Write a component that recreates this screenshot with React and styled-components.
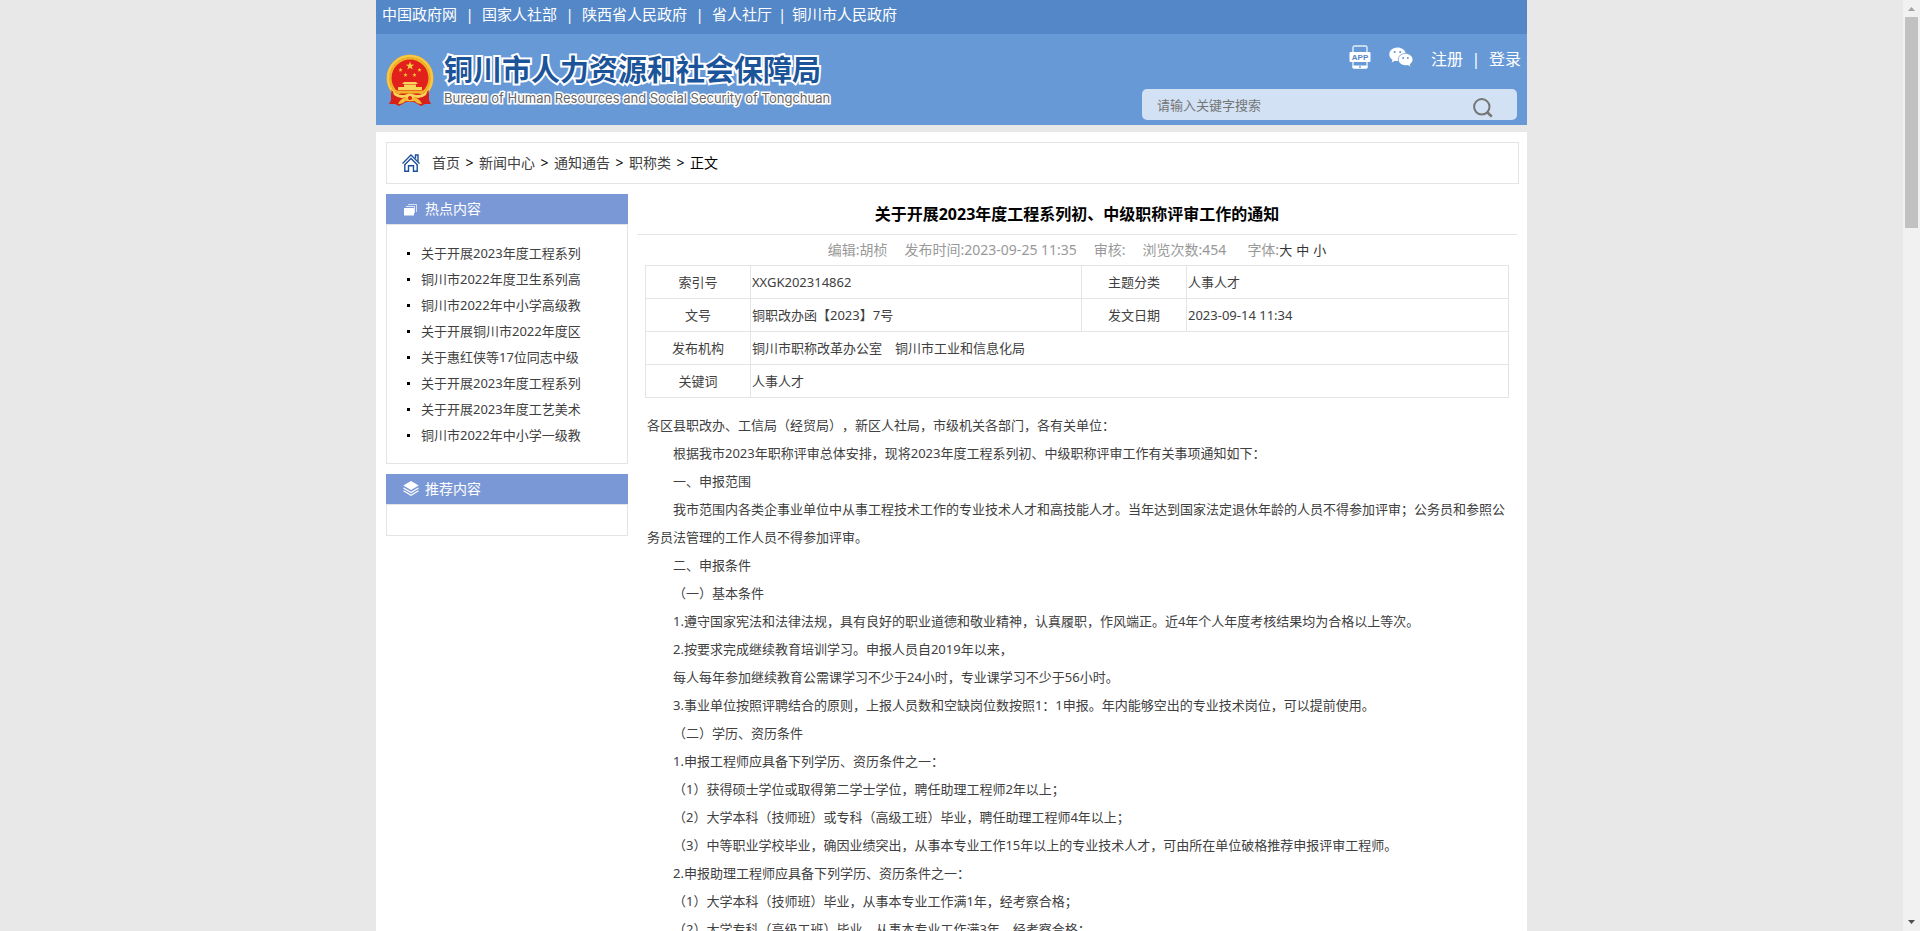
import React from 'react'
import styled, { createGlobalStyle } from 'styled-components'

const topLinks = ['中国政府网', '国家人社部', '陕西省人民政府', '省人社厅', '铜川市人民政府']

const crumbs = ['首页', '新闻中心', '通知通告', '职称类']

const hotList = [
  '关于开展2023年度工程系列',
  '铜川市2022年度卫生系列高',
  '铜川市2022年中小学高级教',
  '关于开展铜川市2022年度区',
  '关于惠红侠等17位同志中级',
  '关于开展2023年度工程系列',
  '关于开展2023年度工艺美术',
  '铜川市2022年中小学一级教',
]

const paragraphs = [
  '根据我市2023年职称评审总体安排，现将2023年度工程系列初、中级职称评审工作有关事项通知如下：',
  '一、申报范围',
  '我市范围内各类企事业单位中从事工程技术工作的专业技术人才和高技能人才。当年达到国家法定退休年龄的人员不得参加评审；公务员和参照公务员法管理的工作人员不得参加评审。',
  '二、申报条件',
  '（一）基本条件',
  '1.遵守国家宪法和法律法规，具有良好的职业道德和敬业精神，认真履职，作风端正。近4年个人年度考核结果均为合格以上等次。',
  '2.按要求完成继续教育培训学习。申报人员自2019年以来，',
  '每人每年参加继续教育公需课学习不少于24小时，专业课学习不少于56小时。',
  '3.事业单位按照评聘结合的原则，上报人员数和空缺岗位数按照1：1申报。年内能够空出的专业技术岗位，可以提前使用。',
  '（二）学历、资历条件',
  '1.申报工程师应具备下列学历、资历条件之一：',
  '（1）获得硕士学位或取得第二学士学位，聘任助理工程师2年以上；',
  '（2）大学本科（技师班）或专科（高级工班）毕业，聘任助理工程师4年以上；',
  '（3）中等职业学校毕业，确因业绩突出，从事本专业工作15年以上的专业技术人才，可由所在单位破格推荐申报评审工程师。',
  '2.申报助理工程师应具备下列学历、资历条件之一：',
  '（1）大学本科（技师班）毕业，从事本专业工作满1年，经考察合格；',
  '（2）大学专科（高级工班）毕业，从事本专业工作满3年，经考察合格；',
]

const STAR = 'M0,-1 L0.24,-0.32 L0.95,-0.31 L0.38,0.12 L0.59,0.81 L0,0.4 L-0.59,0.81 L-0.38,0.12 L-0.95,-0.31 L-0.24,-0.32 Z'

function Emblem() {
  return (
    <svg width="48" height="52" viewBox="0 0 48 52" aria-hidden="true">
      <path d="M5 34 L5 46 L3 50 L9 50 L13 52 L20 48 H28 L35 52 L39 50 L45 50 L43 46 L43 34 Z" fill="#d8201b" />
      <circle cx="24" cy="24" r="23.5" fill="#f0b429" />
      <circle cx="24" cy="24" r="22" fill="none" stroke="#f7c945" strokeWidth="2" />
      <circle cx="24" cy="24" r="20" fill="none" stroke="#e5a524" strokeWidth="1" strokeDasharray="3 2" />
      <circle cx="24" cy="24" r="18.5" fill="#e3211c" />
      <path d={STAR} transform="translate(24 12) scale(4.4)" fill="#f6cf3c" />
      <path d={STAR} transform="translate(14.5 16) scale(2.2)" fill="#f6cf3c" />
      <path d={STAR} transform="translate(33.5 16) scale(2.2)" fill="#f6cf3c" />
      <path d={STAR} transform="translate(19.5 21) scale(2.2)" fill="#f6cf3c" />
      <path d={STAR} transform="translate(28.5 21) scale(2.2)" fill="#f6cf3c" />
      <path d="M16 30 L18 28 H30 L32 30 Z M18 30.5 H30 V33 H18 Z M12 33 H36 V36 H12 Z" fill="#f7d558" />
      <path d="M9 36.5 H39 L36 39.5 H12 Z" fill="#f0b429" />
      <path d="M5 36 L9 47 L16 49 L20 46 H28 L32 49 L39 47 L43 36 L36 40 H12 Z" fill="#d8201b" />
      <path d="M6 35 Q12 43 20 40.5 Q24 38.5 28 40.5 Q36 43 42 35 L40 41 Q35 45 29 43.5 Q24 47 19 43.5 Q13 45 8 41 Z" fill="#f9d65a" />
      <path d="M19 43.5 Q14 45 12 50 Q17 50 20 46.5 H28 Q31 50 36 50 Q34 45 29 43.5 Z" fill="#f3bd35" />
      <circle cx="24" cy="44" r="2" fill="#e3211c" />
    </svg>
  )
}

function AppIcon() {
  return (
    <svg width="22" height="24" viewBox="0 0 22 24" aria-hidden="true">
      <rect x="4" y="1" width="14" height="22" rx="1.5" fill="none" stroke="#e4eefa" strokeWidth="1.4" />
      <rect x="3.5" y="20.5" width="15" height="3" rx="1" fill="#fff" />
      <circle cx="11" cy="22" r="0.9" fill="#6899d7" />
      <rect x="0.5" y="7" width="21" height="10" rx="1" fill="#fff" />
      <text x="11" y="15" textAnchor="middle" fontFamily="Liberation Sans, sans-serif" fontWeight="700" fontSize="8" fill="#5586c6">APP</text>
    </svg>
  )
}

function WechatIcon() {
  return (
    <svg width="24" height="20" viewBox="0 0 24 20" aria-hidden="true">
      <path d="M8.5 0.5 C3.8 0.5 0.3 3.5 0.3 7.3 C0.3 9.6 1.5 11.5 3.5 12.8 L2.7 15.4 L5.7 13.8 Q7.5 14.2 9 14.1 C8.2 10 11.5 6 16.7 6 C15.8 2.8 12.4 0.5 8.5 0.5 Z" fill="#fff" />
      <path d="M16.4 6.8 C12.5 6.8 9.6 9.4 9.6 12.6 C9.6 15.8 12.5 18.3 16.4 18.3 Q17.7 18.3 18.9 18 L21.4 19.4 L20.8 17.2 C22.6 16.1 23.6 14.5 23.6 12.6 C23.6 9.4 20.4 6.8 16.4 6.8 Z" fill="#fff" />
      <circle cx="5.7" cy="5" r="1.1" fill="#6899d7" />
      <circle cx="11.2" cy="5" r="1.1" fill="#6899d7" />
      <circle cx="14.1" cy="10.9" r="1" fill="#6899d7" />
      <circle cx="18.8" cy="10.9" r="1" fill="#6899d7" />
    </svg>
  )
}

function SearchIcon() {
  return (
    <svg width="20" height="20" viewBox="0 0 20 20" aria-hidden="true">
      <circle cx="8.8" cy="8.8" r="7.7" fill="none" stroke="#757575" strokeWidth="2" />
      <path d="M14.2 14.2 L18.8 18.6" stroke="#757575" strokeWidth="2.6" />
    </svg>
  )
}

function HomeIcon() {
  return (
    <svg width="18" height="18" viewBox="0 0 18 18" fill="none" stroke="#1c4f9c" strokeWidth="1.4" aria-hidden="true">
      <path d="M0.5 9.5 L9 1 L17.5 9.5" />
      <path d="M2.5 11 L9 4.5 L15.5 11" />
      <path d="M2.8 10.5 V17.3 H6.5 V11.7 H11.5 V17.3 H15.2 V10.5" />
      <path d="M13.5 4.5 V1 H16 V7.5" />
    </svg>
  )
}

function FolderIcon() {
  return (
    <svg width="16" height="16" viewBox="0 0 16 16" fill="none" aria-hidden="true">
      <path d="M5 4.5 H13.5 V12" stroke="#fff" strokeOpacity="0.7" />
      <path d="M3 6.5 H11.5 V13" stroke="#fff" strokeOpacity="0.8" />
      <rect x="1" y="8" width="10" height="7.5" rx="0.5" fill="#fff" />
    </svg>
  )
}

function LayersIcon() {
  return (
    <svg width="16" height="16" viewBox="0 0 16 16" fill="none" aria-hidden="true">
      <path d="M8 1 L15.7 5.5 L8 10 L0.3 5.5 Z" fill="#fff" />
      <path d="M0.5 8 L8 12.5 L15.5 8" stroke="#fff" strokeWidth="1.2" />
      <path d="M0.5 10.7 L8 15.2 L15.5 10.7" stroke="#fff" strokeWidth="1.2" />
    </svg>
  )
}

function Header() {
  return (
    <header>
      <TopBar>
        {topLinks.map((name, i) => (
          <React.Fragment key={name}>
            {i > 0 && <TopDivider narrow={i === topLinks.length - 1}>|</TopDivider>}
            <a href="#">{name}</a>
          </React.Fragment>
        ))}
      </TopBar>
      <Banner>
        <Logo href="#">
          <Emblem />
          <LogoText>
            <LogoName>铜川市人力资源和社会保障局</LogoName>
            <LogoEnglish>Bureau of Human Resources and Social Security of Tongchuan</LogoEnglish>
          </LogoText>
        </Logo>
        <Tools>
          <UserLinks>
            <IconLink href="#" aria-label="APP"><AppIcon /></IconLink>
            <IconLink href="#" aria-label="微信"><WechatIcon /></IconLink>
            <a href="#">注册</a>
            <UserDivider>|</UserDivider>
            <a href="#">登录</a>
          </UserLinks>
          <SearchBox>
            <SearchInput type="text" placeholder="请输入关键字搜索" aria-label="请输入关键字搜索" />
            <SearchButton type="button" aria-label="搜索"><SearchIcon /></SearchButton>
          </SearchBox>
        </Tools>
      </Banner>
    </header>
  )
}

function Sidebar() {
  return (
    <Aside>
      <section>
        <PanelTitle><FolderIcon />热点内容</PanelTitle>
        <PanelBody>
          <HotList>
            {hotList.map((title, i) => (
              <li key={i}><a href="#">{title}</a></li>
            ))}
          </HotList>
        </PanelBody>
      </section>
      <section>
        <PanelTitle><LayersIcon />推荐内容</PanelTitle>
        <PanelBody />
      </section>
    </Aside>
  )
}

function Article() {
  return (
    <Main>
      <Title>关于开展2023年度工程系列初、中级职称评审工作的通知</Title>
      <Meta>
        <span>编辑:胡桢</span>
        <span>发布时间:2023-09-25 11:35</span>
        <span>审核:</span>
        <span>浏览次数:454</span>
        <FontSize>
          字体:
          <button type="button">大</button>
          <button type="button">中</button>
          <button type="button">小</button>
        </FontSize>
      </Meta>
      <InfoTable>
        <colgroup>
          <LabelCol />
          <WideCol />
          <LabelCol />
          <col />
        </colgroup>
        <tbody>
          <tr>
            <th scope="row">索引号</th>
            <td>XXGK202314862</td>
            <th scope="row">主题分类</th>
            <td>人事人才</td>
          </tr>
          <tr>
            <th scope="row">文号</th>
            <td>铜职改办函【2023】7号</td>
            <th scope="row">发文日期</th>
            <td>2023-09-14 11:34</td>
          </tr>
          <tr>
            <th scope="row">发布机构</th>
            <td colSpan="3">铜川市职称改革办公室　铜川市工业和信息化局</td>
          </tr>
          <tr>
            <th scope="row">关键词</th>
            <td colSpan="3">人事人才</td>
          </tr>
        </tbody>
      </InfoTable>
      <Content>
        <Paragraph flush>各区县职改办、工信局（经贸局），新区人社局，市级机关各部门，各有关单位：</Paragraph>
        {paragraphs.map((text, i) => (
          <Paragraph key={i}>{text}</Paragraph>
        ))}
      </Content>
    </Main>
  )
}

function ScrollBar() {
  return (
    <Track aria-hidden="true">
      <svg width="17" height="17" viewBox="0 0 17 17"><path d="M5 11 L8.5 7 L12 11 Z" fill="#a3a3a3" /></svg>
      <Thumb />
      <svg width="17" height="17" viewBox="0 0 17 17"><path d="M5 6 L8.5 10 L12 6 Z" fill="#505050" /></svg>
    </Track>
  )
}

function App() {
  return (
    <Screen>
      <GlobalStyle />
      <Page>
        <Wrapper>
          <Header />
          <Body>
            <Breadcrumb aria-label="当前位置">
              <HomeIcon />
              <CrumbList>
                {crumbs.map(name => (
                  <React.Fragment key={name}>
                    <a href="#">{name}</a>
                    <CrumbArrow>&gt;</CrumbArrow>
                  </React.Fragment>
                ))}
                <span>正文</span>
              </CrumbList>
            </Breadcrumb>
            <Columns>
              <Sidebar />
              <Article />
            </Columns>
          </Body>
        </Wrapper>
      </Page>
      <ScrollBar />
    </Screen>
  )
}

export default App

const GlobalStyle = createGlobalStyle`
  * {
    box-sizing: border-box;
  }

  body {
    margin: 0;
    background: #e8e8e8;
    font-family: "Noto Sans", "Noto Sans CJK SC", sans-serif;
    font-size: 13px;
    color: #000;
    text-spacing-trim: space-all;
  }

  a {
    color: inherit;
    text-decoration: none;
  }

  button, input {
    font: inherit;
    border: 0;
    padding: 0;
    background: none;
  }

  svg {
    display: block;
    flex: none;
  }
`

const Screen = styled.div`
  display: flex;
  height: 100vh;
`

const Page = styled.div`
  flex: 1;
  min-width: 0;
  overflow-y: auto;
  scrollbar-width: none;
`

const Wrapper = styled.div`
  width: 100%;
  max-width: 1151px;
  margin: 0 auto;
`

const TopBar = styled.nav`
  display: flex;
  padding: 0 6px;
  height: 34px;
  line-height: 28px;
  background: #5387c7;
  color: #fff;
  font-size: 15px;
`

const TopDivider = styled.span.withConfig({
  shouldForwardProp: prop => prop !== 'narrow',
})`
  width: ${props => (props.narrow ? 20 : 25)}px;
  text-align: center;
`

const Banner = styled.div`
  display: flex;
  justify-content: space-between;
  height: 91px;
  padding: 0 6px 0 10px;
  background: #6899d7;
  color: #fff;
`

const Logo = styled.a`
  display: flex;
  gap: 10px;
  padding-top: 20px;
`

const LogoText = styled.div`
  display: flex;
  flex-direction: column;
  font-family: Inter, "Noto Sans CJK SC", sans-serif;
  white-space: nowrap;
`

const LogoName = styled.span`
  color: #1c5499;
  font-size: 29px;
  font-weight: 700;
  line-height: 34px;
  paint-order: stroke fill;
  -webkit-text-stroke: 4px #fff;
`

const LogoEnglish = styled.span`
  color: #666;
  font-size: 13px;
  line-height: 20px;
  paint-order: stroke fill;
  -webkit-text-stroke: 3px #fff;
`

const Tools = styled.div`
  display: flex;
  flex-direction: column;
  align-items: flex-end;
  justify-content: space-between;
  padding: 11px 0 5px;
`

const UserLinks = styled.div`
  display: flex;
  align-items: center;
  font-size: 16px;
  line-height: 28px;
`

const IconLink = styled.a`
  margin-right: 18px;
  padding-bottom: 4px;
`

const UserDivider = styled.span`
  width: 26px;
  text-align: center;
`

const SearchBox = styled.form`
  display: flex;
  align-items: center;
  width: 375px;
  height: 31px;
  margin-right: 4px;
  padding: 0 24px 0 15px;
  border-radius: 5px;
  background: #d2e1f4;
`

const SearchInput = styled.input`
  flex: 1;
  min-width: 0;
  outline: none;
  color: #333;

  &::placeholder {
    color: #757575;
  }
`

const SearchButton = styled.button`
  padding-top: 6px;
  cursor: pointer;
`

const Body = styled.div`
  margin-top: 7px;
  padding: 10px 8px 40px 10px;
  background: #fff;
`

const Breadcrumb = styled.nav`
  display: flex;
  align-items: center;
  gap: 12px;
  height: 42px;
  padding: 0 15px;
  border: 1px solid #e4e4e4;
  font-size: 14px;
`

const CrumbList = styled.div`
  display: flex;
  line-height: 20px;

  a {
    color: #404040;
  }
`

const CrumbArrow = styled.span`
  width: 19px;
  text-align: center;
`

const Columns = styled.div`
  display: flex;
  align-items: flex-start;
  gap: 9px;
  margin-top: 10px;
`

const Aside = styled.aside`
  display: flex;
  flex-direction: column;
  flex: none;
  gap: 10px;
  width: 242px;
`

const PanelTitle = styled.h2`
  display: flex;
  align-items: center;
  gap: 6px;
  height: 30px;
  margin: 0;
  padding: 0 0 2px 17px;
  background: #7b98d6;
  color: #fff;
  font-size: 14px;
  font-weight: 400;
`

const PanelBody = styled.div`
  min-height: 32px;
  border: 1px solid #e4e4e4;
`

const HotList = styled.ul`
  margin: 0;
  padding: 15px 0 15px 34px;
  color: #404040;
  line-height: 26px;
  list-style: none;

  li {
    display: flex;
    align-items: center;
  }

  li::before {
    content: "";
    width: 3px;
    height: 3px;
    margin: 0 11px 0 -14px;
    background: #000;
  }
`

const Main = styled.main`
  flex: 1;
  min-width: 0;
  margin-right: 2px;
`

const Title = styled.h1`
  margin: 0;
  border-bottom: 1px solid #e4e4e4;
  font-size: 16px;
  line-height: 40px;
  text-align: center;
`

const Meta = styled.div`
  display: flex;
  justify-content: center;
  gap: 17px;
  color: #999;
  font-size: 14px;
  line-height: 30px;
`

const FontSize = styled.span`
  display: flex;
  gap: 4px;
  margin-left: 4px;

  button {
    color: #333;
    font-size: 13px;
    cursor: pointer;
  }

  button:first-of-type {
    margin-left: -4px;
  }
`

const InfoTable = styled.table`
  width: calc(100% - 16px);
  margin: 0 8px;
  border-collapse: collapse;
  table-layout: fixed;
  color: #404040;

  th, td {
    height: 33px;
    padding: 0 1px;
    border: 1px solid #e4e4e4;
    line-height: 20px;
    text-align: left;
  }

  th {
    font-weight: 400;
    text-align: center;
  }
`

const LabelCol = styled.col`
  width: 105px;
`

const WideCol = styled.col`
  width: 331px;
`

const Content = styled.div`
  padding: 13px 10px 0;
  color: #404040;
`

const Paragraph = styled.p.withConfig({
  shouldForwardProp: prop => prop !== 'flush',
})`
  margin: 0;
  line-height: 28px;
  text-indent: ${props => (props.flush ? '0' : '2em')};
`

const Track = styled.div`
  display: flex;
  flex: none;
  flex-direction: column;
  width: 17px;
  background: #f1f1f1;

  svg:last-child {
    margin-top: auto;
  }
`

const Thumb = styled.div`
  height: 211px;
  margin: 0 2px;
  background: #c1c1c1;
`
